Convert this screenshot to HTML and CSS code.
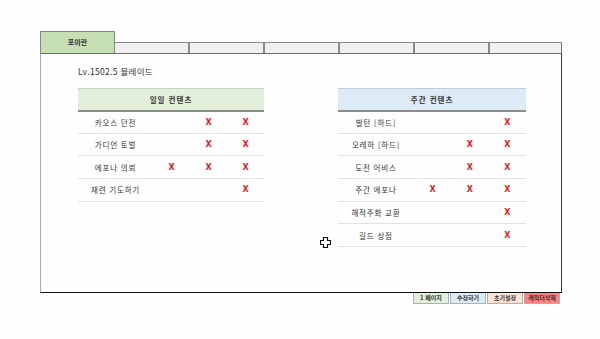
FILE: index.html
```html
<!DOCTYPE html>
<html lang="ko">
<head>
    <meta charset="UTF-8">
    <title>포이란</title>
    <link rel="stylesheet" href="styles.css">
</head>
<body>
    <div class="sheet">
        <div class="tabs">
            <div class="tab active">포이란</div>
            <div class="tab first"></div>
            <div class="tab"></div>
            <div class="tab"></div>
            <div class="tab"></div>
            <div class="tab"></div>
            <div class="tab last"></div>
        </div>

        <div class="frame">
            <p class="level">Lv.1502.5 블레이드</p>

            <div class="boards">
                <table class="board daily">
                    <colgroup>
                        <col class="col-name"><col class="col-x"><col class="col-x"><col class="col-x">
                    </colgroup>
                    <thead>
                        <tr><th colspan="4">일일 컨텐츠</th></tr>
                    </thead>
                    <tbody>
                        <tr><td class="name">카오스 던전</td><td></td><td class="x">X</td><td class="x">X</td></tr>
                        <tr><td class="name">가디언 토벌</td><td></td><td class="x">X</td><td class="x">X</td></tr>
                        <tr><td class="name">에포나 의뢰</td><td class="x">X</td><td class="x">X</td><td class="x">X</td></tr>
                        <tr><td class="name">재련 기도하기</td><td></td><td></td><td class="x">X</td></tr>
                    </tbody>
                </table>

                <table class="board weekly">
                    <colgroup>
                        <col class="col-name"><col class="col-x"><col class="col-x"><col class="col-x">
                    </colgroup>
                    <thead>
                        <tr><th colspan="4">주간 컨텐츠</th></tr>
                    </thead>
                    <tbody>
                        <tr><td class="name">발탄 [하드]</td><td></td><td></td><td class="x">X</td></tr>
                        <tr><td class="name">오레하 [하드]</td><td></td><td class="x">X</td><td class="x">X</td></tr>
                        <tr><td class="name">도전 어비스</td><td></td><td class="x">X</td><td class="x">X</td></tr>
                        <tr><td class="name">주간 에포나</td><td class="x">X</td><td class="x">X</td><td class="x">X</td></tr>
                        <tr><td class="name">해적주화 교환</td><td></td><td></td><td class="x">X</td></tr>
                        <tr><td class="name">길드 상점</td><td></td><td></td><td class="x">X</td></tr>
                    </tbody>
                </table>
            </div>

            <svg class="cursor" width="11" height="11" viewBox="0 0 11 11">
                <path d="M3.5 0.5 H7.5 V3.5 H10.5 V7.5 H7.5 V10.5 H3.5 V7.5 H0.5 V3.5 H3.5 Z" fill="#fff" stroke="#111" stroke-width="1.2"/>
            </svg>
        </div>

        <div class="buttons">
            <div class="btn page">1 페이지</div>
            <div class="btn edit">수정하기</div>
            <div class="btn reset">초기설정</div>
            <div class="btn delete">캐릭터삭제</div>
        </div>
    </div>
</body>
</html>
```

FILE: styles.css
```css
* {
    margin: 0;
    padding: 0;
    box-sizing: border-box;
}

body {
    background: #fefdff;
    font-family: "Noto Sans CJK KR", "Noto Sans", sans-serif;
    color: #333;
}

/* 시트 전체 */
.sheet {
    width: 562px;
    padding: 31px 0 0 40px;
}

/* 상단 탭 */
.tabs {
    display: flex;
    align-items: flex-end;
    height: 22px;
}

.tab {
    width: 75px;
    height: 11px;
    background: #f0eff1;
    border-top: 1px solid #8a8a8a;
    border-left: 2px solid #8a8a8a;
}

.tab.first {
    width: 73px;
    border-left: none;
}

.tab.last {
    width: 74px;
    border-right: 1px solid #777;
}

.tab.active {
    height: 22px;
    background: #c6e0b4;
    border: 1px solid #888;
    border-bottom: none;
    font-size: 7px;
    font-weight: bold;
    text-align: center;
    line-height: 21px;
    color: #333;
}

/* 본문 프레임 */
.frame {
    position: relative;
    height: 240px;
    border-top: 1.5px solid #6e6e6e;
    border-left: 1.5px solid #a8a8a8;
    border-right: 1.5px solid #333;
    border-bottom: 1.5px solid #111;
    padding: 11px 0 0 37px;
}

.level {
    font-size: 8.5px;
    letter-spacing: 0.3px;
    line-height: 13px;
    color: #333;
    margin-bottom: 10px;
}

.boards {
    display: flex;
    align-items: flex-start;
    gap: 74px;
}

/* 컨텐츠 표 */
.board {
    border-collapse: collapse;
    table-layout: fixed;
    font-size: 7.5px;
    letter-spacing: 0.8px;
}

.board.daily {
    width: 186px;
}

.board.weekly {
    width: 188px;
}

.col-name {
    width: 75px;
}

.col-x {
    width: 37px;
}

.board th {
    height: 22px;
    border-top: 1px solid #c9d2c4;
    border-bottom: 2px solid #8c8c8c;
    font-weight: bold;
    color: #333;
    font-size: 7.5px;
    letter-spacing: 1px;
}

.daily th {
    background: #e2efda;
}

.weekly th {
    background: #ddebf7;
    border-top-color: #c4ccd4;
}

.board td {
    height: 22.7px;
    border-bottom: 1.5px solid #e2e2e2;
    text-align: center;
    white-space: nowrap;
}

.board td.name {
    color: #333;
}

.board td.x {
    color: #e81818;
    font-family: "DejaVu Sans", sans-serif;
    font-weight: bold;
    font-size: 8px;
    letter-spacing: 0;
}

.cursor {
    position: absolute;
    left: 279px;
    top: 183px;
}

/* 하단 버튼 */
.buttons {
    display: flex;
    justify-content: flex-end;
    gap: 1px;
    padding-right: 2px;
}

.btn {
    width: 36px;
    height: 11px;
    font-size: 6px;
    font-weight: bold;
    text-align: center;
    line-height: 10px;
    color: #333;
    border: 1px solid #b0b0b0;
    border-top: none;
}

.btn.page {
    background: #e2efda;
}

.btn.edit {
    background: #ddebf7;
}

.btn.reset {
    background: #fce4d6;
}

.btn.delete {
    background: #ff8080;
}
```
